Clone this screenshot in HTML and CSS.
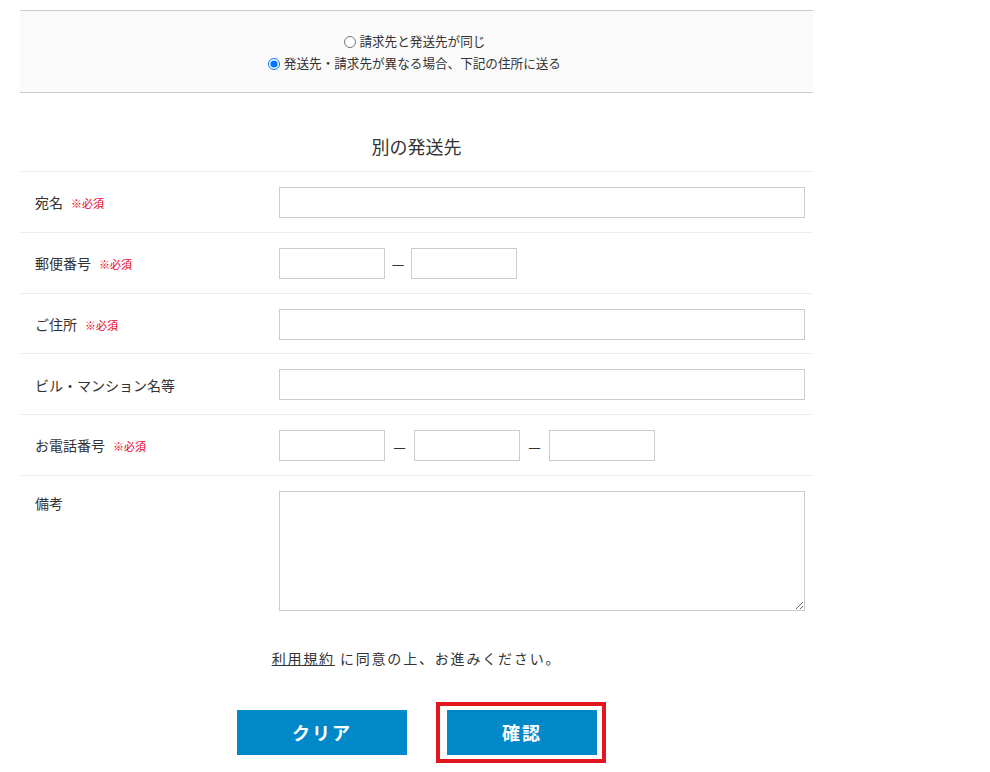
FILE: index.html
```html
<!DOCTYPE html>
<html lang="ja">
<head>
  <meta charset="UTF-8">
  <meta name="viewport" content="width=device-width, initial-scale=1.0">
  <title>別の発送先</title>
  <link rel="stylesheet" href="styles.css">
</head>
<body>
  <div class="page">
    <div class="ship-choice">
      <label><input type="radio" name="shipTo" value="same"> 請求先と発送先が同じ</label>
      <label><input type="radio" name="shipTo" value="other" checked> 発送先・請求先が異なる場合、下記の住所に送る</label>
    </div>

    <h2 class="section-title">別の発送先</h2>

    <div class="form-table">
      <div class="row">
        <div class="label">宛名<span class="req">※必須</span></div>
        <div class="field"><input class="text full" name="name"></div>
      </div>
      <div class="row">
        <div class="label">郵便番号<span class="req">※必須</span></div>
        <div class="field">
          <input class="text short" name="zip1">
          <span class="sep">—</span>
          <input class="text short" name="zip2">
        </div>
      </div>
      <div class="row">
        <div class="label">ご住所<span class="req">※必須</span></div>
        <div class="field"><input class="text full" name="address"></div>
      </div>
      <div class="row">
        <div class="label">ビル・マンション名等</div>
        <div class="field"><input class="text full" name="building"></div>
      </div>
      <div class="row">
        <div class="label">お電話番号<span class="req">※必須</span></div>
        <div class="field tel">
          <input class="text short" name="tel1">
          <span class="sep">—</span>
          <input class="text short" name="tel2">
          <span class="sep">—</span>
          <input class="text short" name="tel3">
        </div>
      </div>
      <div class="row top">
        <div class="label">備考</div>
        <div class="field"><textarea class="text full memo" name="memo"></textarea></div>
      </div>
    </div>

    <p class="terms"><a href="#">利用規約</a> に同意の上、お進みください。</p>

    <div class="actions">
      <button type="reset" class="btn btn-clear">クリア</button>
      <button type="submit" class="btn btn-confirm">確認</button>
    </div>
  </div>
</body>
</html>
```

FILE: styles.css
```css
body {
  margin: 0;
  font-family: "Noto Sans CJK JP", "Noto Sans", sans-serif;
  color: #333;
  background: #fff;
}

.page {
  width: 793px;
  margin: 10px 0 0 20px;
  padding-bottom: 20px;
}

/* Shipping choice box */
.ship-choice {
  background: #fafafa;
  border-top: 1px solid #ccc;
  border-bottom: 1px solid #ccc;
  padding: 19px 0 18px;
  text-align: center;
  font-size: 12.6px;
  line-height: 22px;
}

.ship-choice label {
  display: block;
}

.ship-choice input {
  width: 12px;
  height: 12px;
  margin: 0 1px 0 -4px;
  vertical-align: -2px;
}

.section-title {
  font-size: 18px;
  font-weight: normal;
  line-height: 27px;
  text-align: center;
  margin: 40px 0 11px;
}

/* Form rows */
.form-table {
  border-top: 1px solid #eee;
}

.row {
  display: flex;
  align-items: center;
  padding: 15px 8px 13.8px 15px;
  border-bottom: 1px solid #eee;
}

.row:last-child {
  border-bottom: none;
}

.row.top {
  align-items: flex-start;
}

.label {
  flex: 0 0 244px;
  font-size: 14px;
  line-height: 24px;
}

.req {
  color: #e60012;
  font-size: 11px;
  margin-left: 8px;
}

.field {
  flex: 1;
  display: flex;
  align-items: center;
}

.text {
  box-sizing: border-box;
  height: 31px;
  border: 1px solid #ccc;
  border-radius: 0;
  padding: 4px 8px;
  font: inherit;
  font-size: 14px;
  background: #fff;
}

.full {
  width: 100%;
}

.short {
  width: 106px;
}

.memo {
  height: 120px;
  display: block;
}

.sep {
  width: 26px;
  text-align: center;
  font-size: 14px;
  line-height: 1;
}

.tel .sep {
  width: 29px;
}

/* Terms and buttons */
.terms {
  text-align: center;
  font-size: 14px;
  line-height: 24px;
  letter-spacing: 0.13em;
  margin: 21px 0 40px;
}

.terms a {
  color: #333;
  text-decoration: underline;
}

.actions {
  display: flex;
  justify-content: center;
  gap: 40px;
  padding-left: 1px;
}

.btn {
  height: 45px;
  border: none;
  background: #0088c9;
  color: #fff;
  font-family: inherit;
  font-size: 18px;
  font-weight: bold;
  letter-spacing: 2px;
  cursor: pointer;
}

.btn-clear {
  width: 170px;
}

.btn-confirm {
  width: 150px;
  position: relative;
}

/* highlight frame around the confirm button */
.btn-confirm::after {
  content: "";
  position: absolute;
  top: -8px;
  bottom: -8px;
  left: -11px;
  right: -9px;
  border: 4px solid #e3161f;
}
```
